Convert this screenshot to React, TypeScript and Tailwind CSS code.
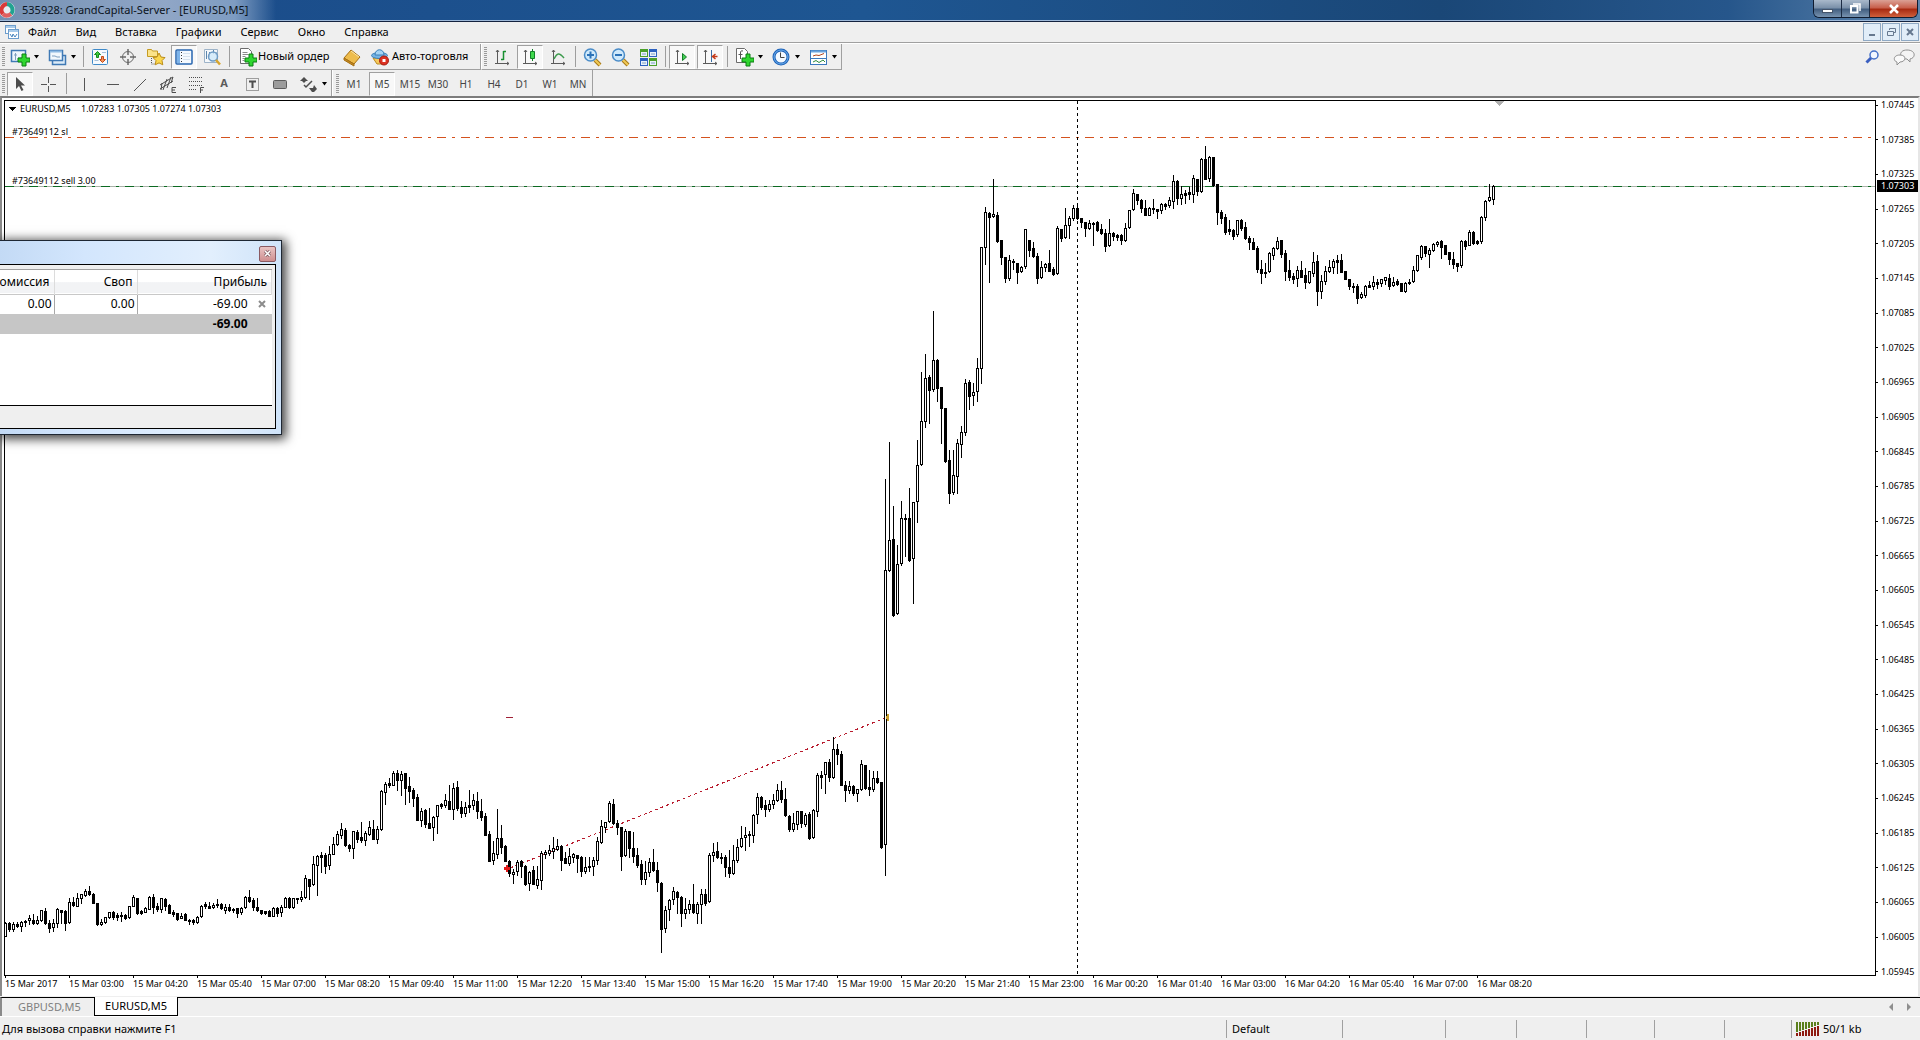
import type { ReactNode } from "react";
import clsx from "clsx";

const menuItems = ["Файл", "Вид", "Вставка", "Графики", "Сервис", "Окно", "Справка"];
const timeframes = ["M1", "M5", "M15", "M30", "H1", "H4", "D1", "W1", "MN"];

const prices = Array.from({ length: 26 }, (_, i) => (1.07445 - i * 0.0006).toFixed(5));

const times = [
	"15 Mar 2017", "15 Mar 03:00", "15 Mar 04:20", "15 Mar 05:40", "15 Mar 07:00", "15 Mar 08:20",
	"15 Mar 09:40", "15 Mar 11:00", "15 Mar 12:20", "15 Mar 13:40", "15 Mar 15:00", "15 Mar 16:20",
	"15 Mar 17:40", "15 Mar 19:00", "15 Mar 20:20", "15 Mar 21:40", "15 Mar 23:00", "16 Mar 00:20",
	"16 Mar 01:40", "16 Mar 03:00", "16 Mar 04:20", "16 Mar 05:40", "16 Mar 07:00", "16 Mar 08:20",
];

// u = bullish, d = bearish, then high, body top, body bottom, low
const candleData = `
u922,923,936,936 d922,923,929,931 u922,924,929,931 d922,924,926,927 u921,922,926,931 u920,921,922,926
u915,918,920,924 d914,920,923,924 u916,920,923,924 u910,910,920,921 d908,911,923,924 d920,923,928,932
u919,923,927,931 u908,909,923,927 d910,910,912,923 d910,911,923,930 u898,902,922,923 d897,902,905,906
u893,898,906,906 u894,894,898,903 u889,891,895,896 d886,891,894,895 d893,894,903,903 d903,903,924,925
u919,922,924,925 u917,917,922,923 u912,912,917,918 d911,912,917,919 d913,915,917,920 d912,915,916,921
d914,915,918,919 u906,906,917,918 u895,897,906,906 d898,898,913,914 d910,911,913,914 u907,908,912,912
u896,897,909,909 d894,897,907,913 d903,906,909,911 u898,898,909,912 d898,899,906,910 d904,905,913,913
d910,912,914,916 d913,913,919,920 u913,916,918,918 d913,914,920,920 d919,920,921,924 d919,920,922,924
u916,917,922,923 u905,906,916,917 d902,904,906,908 d902,906,908,908 u903,905,907,908 d899,904,905,907
d903,904,908,909 u904,907,910,913 d904,907,910,911 d908,909,910,912 d908,908,913,917 u907,908,912,914
u896,897,907,908 d890,897,901,902 d898,900,907,910 d898,907,910,911 d910,910,913,914 d911,911,913,914
d910,911,916,916 u907,908,916,916 d907,908,913,916 u905,907,912,916 u897,898,907,907 d897,898,907,908
u898,898,907,908 d898,898,899,903 u891,897,899,901 u875,878,897,898 d879,879,886,899 u856,864,884,885
u855,856,865,895 d852,855,857,872 d853,855,866,873 u846,854,865,869 u837,844,854,854 u831,834,844,845
u823,829,835,838 d828,830,845,846 d844,845,848,851 u831,831,848,858 d830,832,839,842 d822,837,840,842
u831,833,840,845 u821,827,834,835 d820,829,839,839 u826,829,839,843 u790,791,829,830 u782,784,792,804
d778,783,785,787 u771,773,785,785 d770,773,780,790 u771,774,780,795 d773,773,788,804 d777,786,791,802
d788,790,798,806 d794,797,820,820 u808,811,820,826 d809,810,824,827 d808,823,828,828 u816,817,827,840
u805,805,816,833 d803,804,806,808 u794,800,805,807 d785,801,809,809 u783,788,809,819 d781,787,808,810
d801,807,813,817 u802,807,813,816 d790,805,807,812 u794,800,805,809 d792,801,811,818 d799,811,817,820
d813,816,835,835 d831,834,861,861 u841,853,860,864 u809,838,854,858 d825,838,847,853 d845,846,861,861
d860,861,873,876 u869,872,874,883 u860,862,871,875 d860,861,866,877 d865,866,884,885 u871,872,883,890
d866,870,884,884 u866,879,885,888 u851,853,880,889 u850,852,854,858 u845,850,853,855 u837,848,851,858
u839,846,849,850 d845,846,860,870 d852,858,863,863 u848,856,863,865 u853,854,857,862 d855,855,858,872
d856,857,871,876 u857,867,871,873 d857,866,867,871 u857,860,866,875 u837,841,860,864 u820,826,842,843
u822,822,827,832 u801,803,821,822 d799,804,823,824 d820,823,827,834 d827,827,856,870 u829,831,855,856
d831,831,848,857 d832,848,856,862 d848,855,865,867 d860,864,879,884 u861,872,879,884 u858,862,872,876
d849,862,870,871 d862,870,882,891 d882,883,929,952 u906,910,928,932 u899,900,909,920 u887,891,899,904
d891,892,897,913 d896,897,913,926 u898,909,913,918 u900,904,909,913 d884,904,912,913 u902,904,913,923
u889,894,904,923 d889,894,903,905 u853,855,901,902 u843,852,855,861 d842,851,857,858 d853,857,858,863
d855,857,867,876 d850,867,873,877 u845,860,873,874 u839,847,860,862 u826,838,846,847 u827,835,837,850
d831,834,835,846 u814,815,835,842 u793,797,814,823 d796,797,807,809 d800,805,809,816 u800,804,809,811
u794,800,804,808 u784,790,800,801 d781,790,799,802 d788,799,815,816 d815,816,829,831 u813,823,829,831
u811,811,824,829 d811,811,823,827 u813,815,824,826 d812,814,838,839 u809,810,837,838 u773,775,811,816
d771,775,777,788 u762,762,774,793 d759,762,777,781 u737,749,777,778 d744,749,754,764 d751,754,785,785
d781,785,790,801 u781,786,790,793 d785,786,793,795 u789,789,793,801 u760,764,789,790 d765,765,788,789
d770,787,789,795 u771,778,789,791 d771,778,782,783 d782,782,847,848 u479,570,844,875 u442,540,570,571
d506,539,615,616 u545,564,613,614 u501,518,563,565 d514,518,519,556 d488,518,560,561 u502,502,558,603
u440,465,501,522 u372,421,464,465 u354,378,421,427 d375,377,390,423 u311,360,389,391 d359,360,388,401
d387,387,408,443 d408,408,461,462 d450,460,493,503 u450,475,492,494 u439,443,476,493 u426,432,444,457
u379,383,432,435 d380,382,396,409 u383,392,395,405 u358,368,391,401 u247,247,368,383 u207,212,247,264
d212,213,217,282 u179,214,216,217 d212,215,241,242 d240,240,257,264 d257,257,278,282 u255,260,278,280
d259,261,262,269 d263,263,272,283 u266,267,271,272 u229,229,266,268 d240,240,250,256 d242,248,256,257
d253,256,278,283 u261,267,277,278 u263,264,267,271 d250,263,271,271 d267,269,274,275 u226,228,273,274
d229,229,238,241 u208,225,237,238 u216,218,225,238 u205,208,218,220 d204,208,218,219 d218,218,222,227
d222,222,228,236 u220,223,228,229 d222,223,224,245 d221,222,230,231 d224,229,233,234 d229,233,246,251
u219,233,245,246 d232,233,236,240 d234,235,237,240 d234,235,240,244 u223,228,240,241 u210,210,227,228
u189,193,209,210 d194,194,200,204 d199,200,208,212 d200,208,215,215 u207,208,215,215 d199,208,209,213
d209,209,211,218 u203,204,210,213 d203,204,206,209 u197,200,205,207 u175,181,201,208 d180,181,198,204
u186,194,198,204 d190,193,195,203 d187,192,194,199 u175,178,194,202 d179,179,191,195 u158,159,191,192
d146,159,179,179 u156,157,178,181 d157,157,185,186 d184,184,212,224 d210,212,218,223 d214,217,232,234
d220,229,231,234 d229,230,236,239 u220,220,234,236 d219,220,228,230 d222,227,238,239 d236,238,242,249
d238,242,249,249 d246,248,269,272 d260,269,273,283 d263,272,273,277 u252,253,271,272 u247,248,255,259
u237,241,248,249 d240,240,254,257 d250,253,271,280 d260,270,277,280 d273,276,279,283 u266,270,278,286
d261,270,277,277 d268,275,282,288 u271,271,282,283 u252,262,273,276 d255,261,291,305 u275,281,291,298
u266,271,281,284 u260,267,271,272 u259,261,267,273 d255,260,262,273 d254,260,272,272 d271,271,279,279
d279,279,286,289 d283,286,287,292 d284,286,298,303 u292,294,297,298 u285,286,295,297 d281,285,287,287
u276,282,286,289 d279,282,284,288 u279,279,283,286 u277,277,280,284 d274,278,286,289 u277,282,285,286
d279,281,284,285 d283,283,291,291 u282,283,291,292 d279,282,283,284 u266,270,281,282 u255,255,270,271
u245,246,257,259 d246,246,253,256 u248,250,254,267 u243,244,250,251 u241,242,244,246 d240,241,247,258
d245,245,254,254 d252,252,259,264 d252,259,264,268 d263,263,266,271 u240,241,265,267 d240,241,246,249
u230,232,245,245 d231,232,243,244 d240,241,243,244 u216,217,241,243 u200,201,217,220 u184,197,200,201
u185,186,199,204`;

const candles = candleData
	.trim()
	.split(/\s+/)
	.map((entry, i) => {
		const [high, top, bottom, low] = entry.slice(1).split(",").map(Number);
		return { x: 5 + i * 4, up: entry[0] === "u", high, top, bottom, low };
	});

const box = (x: number, y: number, w: number, h: number) => `M${x} ${y}h${w}v${h}h${-w}z`;

const inkPath = candles
	.map((c) => box(c.x, c.high, 1, c.low - c.high + 1) + box(c.x - 1, c.top, 3, c.bottom - c.top + 1))
	.join("");

const hollowPath = candles
	.filter((c) => c.up && c.bottom - c.top > 1)
	.map((c) => box(c.x, c.top + 1, 1, c.bottom - c.top - 1))
	.join("");

function Icon({ children, size = 20 }: { children: ReactNode; size?: number }) {
	return (
		<svg width={size} height={size} viewBox="0 0 20 20" fill="none" className="shrink-0" aria-hidden="true">
			{children}
		</svg>
	);
}

function Plus() {
	return <path d="M12 7h4v4h4v4h-4v4h-4v-4H8v-4h4z" fill="#2fd62f" stroke="#0a7d12" />;
}

function Axes() {
	return <path d="M5.500 3v14M3 16.500h14M4 5l1.500-2L7 5M15 15l2 1.500L15 18" stroke="#5a5a5a" />;
}

function NewChartIcon() {
	return (
		<Icon>
			<rect x="1.500" y="3.500" width="14" height="11" fill="#eef6fd" stroke="#3f79b5" strokeWidth="1.500" />
			<path d="M5.500 6v7M4 8h3M8 11h4" stroke="#7f9fbf" />
			<Plus />
		</Icon>
	);
}

function ProfilesIcon() {
	return (
		<Icon>
			<rect x="5.500" y="8.500" width="13" height="9" fill="#dcebf8" stroke="#3f79b5" strokeWidth="1.500" />
			<rect x="2.500" y="3.500" width="13" height="10" fill="#f2f8fd" stroke="#3f79b5" strokeWidth="1.500" />
			<path d="M3 4.500h12" stroke="#8cb9e2" strokeWidth="2" />
			<path d="M5 9h3l2 1h3" stroke="#7f9fbf" />
		</Icon>
	);
}

function MarketIcon() {
	return (
		<Icon>
			<rect x="2.500" y="2.500" width="15" height="15" rx="1" fill="#f6fafe" stroke="#3f8ac9" />
			<path d="M7.500 4.500l3 3h-2v3h-2v-3h-2z" fill="#3ec93e" stroke="#128a1a" />
			<path d="M12.500 15.500l-3-3h2v-3h2v3h2z" fill="#f4935b" stroke="#c44a16" />
			<path d="M12 5.500h4M4.500 13.500h4" stroke="#a5bfd8" />
		</Icon>
	);
}

function TargetIcon() {
	return (
		<Icon>
			<circle cx="10" cy="10" r="5.500" stroke="#6a6a6a" />
			<path d="M10 2v6M10 12v6M2 10h6M12 10h6" stroke="#6a6a6a" strokeWidth="1.500" />
		</Icon>
	);
}

function FavoritesIcon() {
	return (
		<Icon>
			<path d="M1.500 9.500v-7h4l1 1.500h5v5.500z" fill="#fbe389" stroke="#c59b22" />
			<path d="M5.500 11v6h3" stroke="#555" strokeDasharray="1 1" />
			<path d="M13 6l2 4 4 .6-3 3 .8 4.200L13 15.900l-3.800 1.900.8-4.200-3-3 4-.6z" fill="#fbd74e" stroke="#bb8d18" />
		</Icon>
	);
}

function NavigatorIcon() {
	return (
		<Icon>
			<rect x="2" y="3" width="16" height="14" rx="1" fill="#f4f9fe" stroke="#2766b0" strokeWidth="1.500" />
			<path d="M3 4h3v12H3z" fill="#7db4ea" />
			<path d="M9 6.500h7M9 9.500h7M9 12.500h7" stroke="#d5e2ee" />
			<path d="M7.500 5v10" stroke="#333" strokeDasharray="1 2" />
		</Icon>
	);
}

function TesterIcon() {
	return (
		<Icon>
			<path d="M2.500 2.500h13v13h-13z" fill="#f5f8fb" stroke="#9db3c8" />
			<path d="M4.500 4v8M7.500 5v5M11.500 3v4M14 5v3" stroke="#5c86ad" />
			<circle cx="11" cy="9.500" r="4.500" fill="#cfe8fa" fillOpacity=".8" stroke="#6f9cc5" strokeWidth="1.500" />
			<path d="M14 13l4 4.500" stroke="#d8a52d" strokeWidth="2.500" />
		</Icon>
	);
}

function OrderIcon() {
	return (
		<Icon>
			<path d="M3.500 1.500h8l3 3v12h-11z" fill="#fff" stroke="#6b6b6b" />
			<path d="M5.500 5.500h5M5.500 7.500h6M5.500 9.500h3M5.500 11.500h2M5.500 13.500h2" stroke="#8a8a8a" />
			<Plus />
		</Icon>
	);
}

function BookIcon() {
	return (
		<Icon>
			<path d="M2 11l7-8 9 7-6 7z" fill="#eebc4c" stroke="#a66f12" />
			<path d="M2 11l10 6v2L2 13z" fill="#c48a22" stroke="#a66f12" />
			<path d="M9 4l8 6" stroke="#fbe6a8" />
		</Icon>
	);
}

function AutoTradeIcon() {
	return (
		<Icon>
			<path d="M3 11h13l-3 6H7z" fill="#f6c95c" stroke="#b98a20" />
			<ellipse cx="9.500" cy="8.500" rx="8" ry="3" fill="#74b4e4" stroke="#3a7fb8" />
			<path d="M5 8c0-7 9-7 9 0z" fill="#a5d3f3" stroke="#3a7fb8" />
			<circle cx="14" cy="13.500" r="4.500" fill="#dd3222" stroke="#a51a10" />
			<path d="M12.500 12h3v3h-3z" fill="#fff" />
		</Icon>
	);
}

function BarsIcon() {
	return (
		<Icon>
			<Axes />
			<path d="M11.500 4v9M9 12.500h2.500M11.500 4.500H14" stroke="#189030" strokeWidth="1.500" />
		</Icon>
	);
}

function CandlesIcon() {
	return (
		<Icon>
			<Axes />
			<path d="M12.500 2v12" stroke="#138028" />
			<path d="M10.500 4.500h4v7h-4z" fill="#3fd94d" stroke="#138028" />
		</Icon>
	);
}

function LineIcon() {
	return (
		<Icon>
			<Axes />
			<path d="M6 12c3-6 5-7 10-1" stroke="#3c9b4d" strokeWidth="1.500" />
		</Icon>
	);
}

function ZoomIcon({ plus }: { plus?: boolean }) {
	return (
		<Icon>
			<path d="M13 13l5 5" stroke="#a87a1a" strokeWidth="4" />
			<path d="M13 13l5 5" stroke="#f0c955" strokeWidth="2" />
			<circle cx="8.500" cy="8" r="6" fill="#cfe9fb" stroke="#4a8cc8" strokeWidth="1.500" />
			<path d={plus ? "M5 8h7M8.500 4.500v7" : "M5 8h7"} stroke="#2b72b8" strokeWidth="2" />
		</Icon>
	);
}

function TileIcon() {
	return (
		<Icon>
			<path d="M2 2h8v8H2zM11 11h8v8h-8z" fill="#4ba02a" />
			<path d="M11 2h8v8h-8zM2 11h8v8H2z" fill="#2d62c0" />
			<path d="M3 5h6v4H3zM12 5h6v4h-6zM3 14h6v4H3zM12 14h6v4h-6z" fill="#e9f2fb" />
			<path d="M4 7h4M13 7h4M4 16h4M13 16h4" stroke="#7fa0c0" />
		</Icon>
	);
}

function ScrollIcon() {
	return (
		<Icon>
			<Axes />
			<path d="M10.500 6.500v7l4-3.500z" fill="#45cf55" stroke="#138028" />
		</Icon>
	);
}

function ShiftIcon() {
	return (
		<Icon>
			<Axes />
			<path d="M11.500 3v12" stroke="#3b6ea5" />
			<path d="M12.500 9.500h5M15.500 7l-3 2.500 3 2.500" stroke="#c43a1a" strokeWidth="1.500" />
		</Icon>
	);
}

function IndicatorsIcon() {
	return (
		<Icon>
			<path d="M2.500 1.500h8l3 3v11h-11z" fill="#fff" stroke="#6b6b6b" />
			<path d="M9 4c-2-.5-2.500 0-2.500 2v6M4.500 7.500h4" stroke="#555" />
			<Plus />
		</Icon>
	);
}

function ClockIcon() {
	return (
		<Icon>
			<circle cx="10" cy="10" r="7" fill="#f3f9ff" stroke="#1d62b8" strokeWidth="3" />
			<circle cx="10" cy="10" r="7" stroke="#6db0ee" />
			<path d="M9.500 5.500v5h4" stroke="#444" />
		</Icon>
	);
}

function TemplateIcon() {
	return (
		<Icon>
			<rect x="2.500" y="3.500" width="16" height="14" fill="#fff" stroke="#3b78bd" />
			<path d="M3 4.500h15" stroke="#6ba4dd" strokeWidth="2" />
			<path d="M3 11.500h15" stroke="#3b78bd" />
			<path d="M5 9l3-1 3 .5 5-2" stroke="#b0431c" />
			<path d="M5 15l3-1.500 3 2 4-2.500 2 2" stroke="#2f8d3b" />
		</Icon>
	);
}

function CursorIcon() {
	return (
		<Icon>
			<path d="M6 3v12l3-3 2.500 5 2-1-2.500-4.500h4z" fill="#4d4d4d" />
		</Icon>
	);
}

function CrossIcon() {
	return (
		<Icon>
			<path d="M10.500 3v6M10.500 12v6M3 10.500h6M12 10.500h6" stroke="#555" />
		</Icon>
	);
}

function StrokeIcon({ d }: { d: string }) {
	return (
		<Icon>
			<path d={d} stroke="#555" />
		</Icon>
	);
}

function ChannelIcon() {
	return (
		<Icon>
			<path d="M2 11L15 3M2 15l13-8M5 16L9 5M9 14l4-11M4 9l-1 7M13 9l2-6" stroke="#4d4d4d" />
			<path d="M18 13.500h-4v5h4M14 16h3" stroke="#4d4d4d" />
		</Icon>
	);
}

function FiboIcon() {
	return (
		<Icon>
			<path d="M3 3.500h14M3 7.500h14M3 11.500h14M3 15.500h8" stroke="#4d4d4d" strokeDasharray="1 1" />
			<path d="M14.500 19v-5.500H18M14.500 16H17" stroke="#4d4d4d" />
		</Icon>
	);
}

function LabelIcon() {
	return (
		<Icon>
			<rect x="4.500" y="4.500" width="12" height="12" stroke="#4d4d4d" strokeDasharray="1 1" />
			<path d="M7 7.500h7M10.500 7v7" stroke="#4d4d4d" strokeWidth="2" />
		</Icon>
	);
}

function RectIcon() {
	return (
		<Icon>
			<rect x="3.500" y="6.500" width="13" height="8" rx="1" fill="#9c9c9c" stroke="#5c5c5c" />
		</Icon>
	);
}

function ArrowsIcon() {
	return (
		<Icon>
			<path d="M6 3l4 4H8l-2 2-2-2H2zM11 14h4l1-3 3 4-3 3h-2z" fill="#4d4d4d" />
			<path d="M6 11l2 2 6-6" stroke="#4d4d4d" strokeWidth="1.500" />
		</Icon>
	);
}

function Grip() {
	return (
		<div className="flex w-[6px] shrink-0 items-center justify-center">
			<div className="h-5 w-[3px] bg-[repeating-linear-gradient(#9a9a9a_0_1px,#efefef_1px_2px)]" />
		</div>
	);
}

function Separator({ wide }: { wide?: boolean }) {
	return (
		<div className={clsx("flex shrink-0 items-center justify-center", wide ? "w-2" : "w-[6px]")}>
			<div className="h-[21px] w-px bg-[#9d9d9d]" />
		</div>
	);
}

function Caret() {
	return (
		<svg width="7" height="4" viewBox="0 0 7 4" className="shrink-0" aria-hidden="true">
			<path d="M1 0h5L3.500 3.500z" fill="#000" />
		</svg>
	);
}

function ToolButton({ label, active, children }: { label: string; active?: boolean; children: ReactNode }) {
	return (
		<button
			aria-label={label}
			aria-pressed={active}
			className={clsx(
				"mx-px flex h-6 w-[26px] shrink-0 items-center justify-center border",
				active ? "border-t-[#a0a0a0] border-l-[#a0a0a0] border-r-white border-b-white bg-[#f8f8f8]" : "border-transparent",
			)}
		>
			{children}
		</button>
	);
}

function DropButton({ label, children }: { label: string; children: ReactNode }) {
	return (
		<button aria-label={label} className="flex h-6 w-[37px] shrink-0 items-center gap-[3px] pl-1">
			{children}
			<Caret />
		</button>
	);
}

function TitleBar() {
	return (
		<header className="relative flex h-[22px] items-start border-b border-[#14233f] bg-[linear-gradient(90deg,#1a4a88_0%,#1e5692_45%,#1a4777_75%,#26568b_90%,#5d84ac_100%)] shadow-[inset_0_-1px_#9db8d8]">
			<div className="flex h-5 items-center gap-[6px] bg-[linear-gradient(90deg,#7390b3_0%,#90a6c6_60%,#7e9cc2_85%,transparent_100%)] pr-7">
				<svg width="16" height="18" viewBox="0 0 16 18" fill="none" aria-hidden="true">
					<circle cx="7" cy="9" r="8" fill="#e8edf2" />
					<path d="M7 3a6 6 0 0 0-4 10" stroke="#d93a3a" strokeWidth="4" />
					<path d="M7 3a6 6 0 0 1 4 10" stroke="#22a391" strokeWidth="4" />
					<path d="M3 13c2 2 5 2 8 0" stroke="#e06060" strokeWidth="4" />
				</svg>
				<h1 className="text-[11px] leading-5 whitespace-nowrap text-[#0b1320]">535928: GrandCapital-Server - [EURUSD,M5]</h1>
			</div>
			<div className="mr-[2px] ml-auto flex h-[18px] overflow-hidden rounded-b-md border border-t-0 border-[#101c30]">
				<button
					aria-label="Свернуть"
					className="flex w-7 items-center justify-center border-r border-[#1c2c44] bg-[linear-gradient(#a9b9cb_0%,#7b91aa_45%,#435f80_55%,#7893b0_100%)]"
				>
					<span className="mt-1 h-1 w-[11px] border border-[#44546a] bg-white" />
				</button>
				<button
					aria-label="Развернуть"
					className="flex w-7 items-center justify-center border-r border-[#1c2c44] bg-[linear-gradient(#a9b9cb_0%,#7b91aa_45%,#435f80_55%,#7893b0_100%)]"
				>
					<svg width="13" height="13" viewBox="0 0 13 13" fill="none" aria-hidden="true">
						<path d="M4 2h7v7" stroke="#fff" strokeWidth="1.500" />
						<rect x="2" y="4" width="6.500" height="6.500" stroke="#fff" strokeWidth="2" />
					</svg>
				</button>
				<button
					aria-label="Закрыть"
					className="flex w-[47px] items-center justify-center bg-[linear-gradient(#dba195_0%,#c8604c_45%,#a82b12_55%,#d0603c_100%)]"
				>
					<svg width="12" height="10" viewBox="0 0 12 10" aria-hidden="true">
						<path d="M2 1l8 8M10 1L2 9" stroke="#fff" strokeWidth="2.500" />
					</svg>
				</button>
			</div>
		</header>
	);
}

function MenuBar() {
	const buttons = [
		{ label: "Свернуть график", d: "M5 11h6", bold: true },
		{ label: "Восстановить график", d: "M6.500 6V4.500h6v4H11M4.500 7.500h6v4h-6z", bold: false },
		{ label: "Закрыть график", d: "M5 5l6 6M11 5l-6 6", bold: true },
	];
	return (
		<nav className="flex h-[21px] items-center border-b border-[#a0a0a0] bg-[#efefef] pl-1">
			<svg width="16" height="16" viewBox="0 0 16 16" fill="none" aria-hidden="true">
				<rect x="1.500" y="1.500" width="10" height="8" fill="#fff" stroke="#6d9dcc" />
				<rect x="4.500" y="5.500" width="10" height="9" fill="#fff" stroke="#6d9dcc" />
				<path d="M2 3h9M5 7h9" stroke="#a9cbea" strokeWidth="2" />
				<path d="M6 10l2 3 1-3 2 3 2-3" stroke="#4a86bf" />
			</svg>
			{menuItems.map((item) => (
				<button key={item} className="ml-2 pr-[11px] text-[11px] leading-5 text-black">
					{item}
				</button>
			))}
			<div className="mr-px ml-auto flex gap-[1px]">
				{buttons.map((button) => (
					<button
						key={button.label}
						aria-label={button.label}
						className="flex size-[18px] items-center justify-center border border-[#8fa9c4] bg-[#e1edf8]"
					>
						<svg width="16" height="16" viewBox="0 0 16 16" fill="none" aria-hidden="true">
							<path d={button.d} stroke="#66788f" strokeWidth={button.bold ? 2 : 1} />
						</svg>
					</button>
				))}
			</div>
		</nav>
	);
}

function MainToolbar() {
	return (
		<div className="flex h-[27px] border-t border-white">
			<div className="flex items-center border-r border-b border-[#a0a0a0]">
				<Grip />
				<DropButton label="Новый график"><NewChartIcon /></DropButton>
				<DropButton label="Профили"><ProfilesIcon /></DropButton>
				<Separator />
				<ToolButton label="Обзор рынка"><MarketIcon /></ToolButton>
				<ToolButton label="Окно данных"><TargetIcon /></ToolButton>
				<ToolButton label="Навигатор"><FavoritesIcon /></ToolButton>
				<ToolButton label="Терминал" active><NavigatorIcon /></ToolButton>
				<ToolButton label="Тестер стратегий"><TesterIcon /></ToolButton>
				<Separator />
				<button className="flex h-6 w-[106px] items-center gap-px pl-[5px] text-[11px] whitespace-nowrap">
					<OrderIcon />
					Новый ордер
				</button>
				<ToolButton label="MetaEditor"><BookIcon /></ToolButton>
				<button className="flex h-6 w-[114px] items-center gap-[2px] pl-1 text-[11px] whitespace-nowrap">
					<AutoTradeIcon />
					Авто-торговля
				</button>
			</div>
			<div className="flex items-center border-r border-b border-l border-[#a0a0a0] border-l-white">
				<Grip />
				<ToolButton label="Бары"><BarsIcon /></ToolButton>
				<ToolButton label="Японские свечи" active><CandlesIcon /></ToolButton>
				<ToolButton label="Линия"><LineIcon /></ToolButton>
				<Separator />
				<ToolButton label="Увеличить"><ZoomIcon plus /></ToolButton>
				<ToolButton label="Уменьшить"><ZoomIcon /></ToolButton>
				<ToolButton label="Окна мозаикой"><TileIcon /></ToolButton>
				<Separator />
				<ToolButton label="Автопрокрутка" active><ScrollIcon /></ToolButton>
				<ToolButton label="Сдвиг графика" active><ShiftIcon /></ToolButton>
				<Separator />
				<DropButton label="Индикаторы"><IndicatorsIcon /></DropButton>
				<DropButton label="Периоды"><ClockIcon /></DropButton>
				<DropButton label="Шаблоны"><TemplateIcon /></DropButton>
			</div>
			<div className="mr-1 ml-auto flex items-center gap-3">
				<button aria-label="Поиск">
					<svg width="16" height="16" viewBox="0 0 16 16" fill="none" aria-hidden="true">
						<circle cx="10" cy="6" r="4" fill="#f2f7ff" stroke="#4470c8" strokeWidth="1.500" />
						<path d="M7 9l-4.500 4.500" stroke="#3a5fc0" strokeWidth="3" />
					</svg>
				</button>
				<button aria-label="Чат">
					<svg width="24" height="18" viewBox="0 0 24 18" fill="none" aria-hidden="true">
						<path d="M15 2c9 0 9 8 3 9v3l-3-3c-8 0-9-9 0-9z" fill="#f4f4f4" stroke="#8f8f8f" />
						<path d="M8 7c7 0 6 7 0 7l-3 3v-3C1 13 1 7 8 7z" fill="#fafafa" stroke="#8f8f8f" />
					</svg>
				</button>
			</div>
		</div>
	);
}

function DrawingToolbar() {
	return (
		<div className="flex h-[26px]">
			<div className="flex items-center border-r border-[#a0a0a0] pt-px">
				<Grip />
				<ToolButton label="Курсор" active><CursorIcon /></ToolButton>
				<ToolButton label="Перекрестие"><CrossIcon /></ToolButton>
				<Separator wide />
				<ToolButton label="Вертикальная линия"><StrokeIcon d="M10.500 4v13" /></ToolButton>
				<ToolButton label="Горизонтальная линия"><StrokeIcon d="M5 10.500h12" /></ToolButton>
				<ToolButton label="Трендовая линия"><StrokeIcon d="M4 17L16 5" /></ToolButton>
				<ToolButton label="Канал"><ChannelIcon /></ToolButton>
				<ToolButton label="Фибоначчи"><FiboIcon /></ToolButton>
				<ToolButton label="Текст">
					<span className="text-[11px] font-bold text-[#5a5a5a]">A</span>
				</ToolButton>
				<ToolButton label="Текстовая метка"><LabelIcon /></ToolButton>
				<ToolButton label="Прямоугольник"><RectIcon /></ToolButton>
				<DropButton label="Стрелки"><ArrowsIcon /></DropButton>
			</div>
			<div className="flex items-center border-r border-l border-[#a0a0a0] border-l-white pt-px pl-px">
				<Grip />
				{timeframes.map((tf) => (
					<ToolButton key={tf} label={tf} active={tf === "M5"}>
						<span className="pt-px text-[10px] text-[#444]">{tf}</span>
					</ToolButton>
				))}
			</div>
		</div>
	);
}

function PriceChart() {
	return (
		<svg width="100%" height="100%" className="block" role="img" aria-label="EURUSD, M5">
			<g shapeRendering="crispEdges">
				<line x1="0" x2="100%" y1="36.500" y2="36.500" stroke="#d4521e" strokeDasharray="9 6 3 6" />
				<line x1="0" x2="100%" y1="85.500" y2="85.500" stroke="#a9b3a9" />
				<line x1="0" x2="100%" y1="85.500" y2="85.500" stroke="#0c6a22" strokeDasharray="9 6 3 6" />
			</g>
			<g transform="translate(-5 -101)" shapeRendering="crispEdges">
				<path d="M1494 101h10l-5 5z" fill="#b0b0b0" />
				<path d="M1077.500 101v873" stroke="#000" strokeDasharray="3 3" />
				<path d="M506 717.500h7" stroke="#a02036" />
				<path d="M510 868L885 718" stroke="#b81c2e" strokeDasharray="3 3" />
				<path d={inkPath} fill="#000" />
				<path d={hollowPath} fill="#fff" />
				<path d="M504 867h2v-2h2v2h2v3h-2v2h-2v-2h-2z" fill="#e01818" />
				<path d="M887 714h2v7h-2v-2h-1v-3h1z" fill="#c9a030" />
				<path d="M8 107h8l-4 4z" fill="#000" />
			</g>
			<g transform="translate(-5 -101)" className="text-[9px]" fill="#000">
				<text x="20" y="112">EURUSD,M5</text>
				<text x="81" y="112">1.07283 1.07305 1.07274 1.07303</text>
				<text x="12" y="135">#73649112 sl</text>
				<text x="12" y="184">#73649112 sell 3.00</text>
			</g>
		</svg>
	);
}

function TerminalWindow() {
	return (
		<section className="absolute top-[142px] -left-[2px] flex h-[195px] w-[282px] flex-col border border-l-0 border-[#1e2733] bg-[linear-gradient(90deg,#c3daf5,#d3e6fd_30%,#e2effd_75%,#cfe3f9)] pr-[5px] pb-[5px] shadow-[2px_2px_10px_2px_rgba(0,0,0,0.75)]">
			<div className="flex h-[23px] shrink-0 items-center justify-end pt-[2px]">
				<button
					aria-label="Закрыть"
					className="flex h-4 w-[17px] items-center justify-center rounded-xs border border-[#8a5a62] bg-[linear-gradient(#e9c4c4,#cf8f90)]"
				>
					<svg width="9" height="9" viewBox="0 0 9 9" aria-hidden="true">
						<path d="M2 2l5 5M7 2L2 7" stroke="#7b5a60" strokeWidth="3" />
						<path d="M2 2l5 5M7 2L2 7" stroke="#fff" strokeWidth="1.500" />
					</svg>
				</button>
			</div>
			<div className="flex flex-1 flex-col border border-l-0 border-black bg-[#efefef] pt-1 pr-[3px]">
				<div className="flex-1 border-t border-b border-t-[#a0a0a0] border-b-black bg-white">
					<table className="w-full table-fixed text-[12px] leading-[18px]">
						<colgroup>
							<col className="w-[54px]" />
							<col className="w-[83px]" />
							<col />
						</colgroup>
						<thead>
							<tr className="h-6 border-b border-[#c8c8c8] bg-[linear-gradient(#ffffff_50%,#f2f3f5_55%)]">
								<th scope="col" className="border-r border-[#dcdcdc] pr-1 font-normal">
									<div className="flex justify-end overflow-hidden">Комиссия</div>
								</th>
								<th scope="col" className="border-r border-[#dcdcdc] pr-1 text-right font-normal">Своп</th>
								<th scope="col" className="border-r border-[#dcdcdc] pr-1 text-right font-normal">Прибыль</th>
							</tr>
						</thead>
						<tbody>
							<tr className="h-5">
								<td className="border-r border-[#a8a8a8] pr-[2px] text-right">0.00</td>
								<td className="border-r border-[#a8a8a8] pr-[2px] text-right">0.00</td>
								<td className="pr-[6px]">
									<div className="flex items-center justify-end gap-[10px]">
										-69.00
										<button aria-label="Закрыть ордер">
											<svg width="8" height="8" viewBox="0 0 8 8" className="block" aria-hidden="true">
												<path d="M1 1l6 6M7 1L1 7" stroke="#8c8c8c" strokeWidth="2" />
											</svg>
										</button>
									</div>
								</td>
							</tr>
							<tr className="h-5 bg-[#c6c6c6]">
								<td />
								<td />
								<td className="pr-6 text-right font-bold">-69.00</td>
							</tr>
						</tbody>
					</table>
				</div>
				<div className="h-[22px]" />
			</div>
		</section>
	);
}

function ChartWindow() {
	return (
		<main className="relative flex min-h-0 flex-1 flex-col border-x-2 border-t-2 border-t-[#7c7c7c] border-r-[#e6e6e6] border-l-[#8a8a8a] bg-white text-[9px]">
			<div className="flex min-h-0 flex-1">
				<div className="mt-[2px] ml-[2px] min-w-0 flex-1 border border-black">
					<PriceChart />
				</div>
				<div className="relative -mb-[2px] w-[42px] shrink-0 pt-px">
					<ul className="flex h-full flex-col justify-between">
						{prices.map((price) => (
							<li key={price} className="flex h-3 items-center gap-[3px] leading-3 before:h-px before:w-[2px] before:bg-black">
								{price}
							</li>
						))}
					</ul>
					<div className="absolute top-[82px] right-0 left-px h-3 bg-black pl-1 leading-3 text-white">1.07303</div>
				</div>
			</div>
			<ul className="ml-[3px] flex h-5 shrink-0 overflow-hidden">
				{times.map((time) => (
					<li key={time} className="w-16 shrink-0 leading-[11px] whitespace-nowrap before:block before:h-[2px] before:w-px before:bg-black">
						{time}
					</li>
				))}
			</ul>
			<TerminalWindow />
		</main>
	);
}

function ChartTabs() {
	return (
		<div className="flex h-[21px] shrink-0 border-b border-white bg-[#efefef] pt-px text-[11px]">
			<div className="w-[94px] border-t border-l-2 border-t-black border-l-[#8a8a8a]">
				<button className="w-full pl-4 text-left leading-[18px] text-[#808080]">GBPUSD,M5</button>
			</div>
			<button className="h-[19px] w-[84px] border border-t-0 border-black bg-white leading-[18px]">EURUSD,M5</button>
			<div className="flex flex-1 items-center justify-end gap-3 border-t border-black pr-2">
				<button aria-label="Назад">
					<svg width="6" height="8" viewBox="0 0 6 8" className="block" aria-hidden="true">
						<path d="M5 0v8L1 4z" fill="#8e8e8e" />
					</svg>
				</button>
				<button aria-label="Вперёд">
					<svg width="6" height="8" viewBox="0 0 6 8" className="block" aria-hidden="true">
						<path d="M1 0v8l4-4z" fill="#8e8e8e" />
					</svg>
				</button>
			</div>
		</div>
	);
}

function StatusBar() {
	const cells = ["w-[103px]", "w-[71px]", "w-[70px]", "w-[68px]", "w-[70px]", "w-[67px]"];
	return (
		<footer className="flex h-[23px] shrink-0 items-center bg-[#efefef] text-[11px] leading-[18px]">
			<p className="flex-1 pl-[2px]">Для вызова справки нажмите F1</p>
			<div className="w-[116px] border-l border-[#a0a0a0] pl-[5px]">Default</div>
			{cells.map((width, index) => (
				<div key={index} className={clsx("h-[18px] border-l border-[#a0a0a0]", width)} />
			))}
			<div className="flex w-[129px] items-center gap-[3px] border-l border-[#a0a0a0] pl-1">
				<svg width="24" height="14" viewBox="0 0 24 14" shapeRendering="crispEdges" aria-hidden="true">
					{[10, 9, 8, 7, 6, 5, 4, 3].map((top, i) => (
						<g key={top}>
							<rect x={i * 3} y="0" width="2" height={top} fill="#5b7f1c" />
							<rect x={i * 3} y={top + 1} width="2" height={13 - top} fill="#8e1b10" />
						</g>
					))}
				</svg>
				50/1 kb
			</div>
		</footer>
	);
}

export default function App() {
	return (
		<div className="flex h-screen flex-col overflow-hidden bg-[#efefef] font-['Noto_Sans','Open_Sans',sans-serif] text-black">
			<TitleBar />
			<MenuBar />
			<MainToolbar />
			<DrawingToolbar />
			<ChartWindow />
			<ChartTabs />
			<StatusBar />
		</div>
	);
}
